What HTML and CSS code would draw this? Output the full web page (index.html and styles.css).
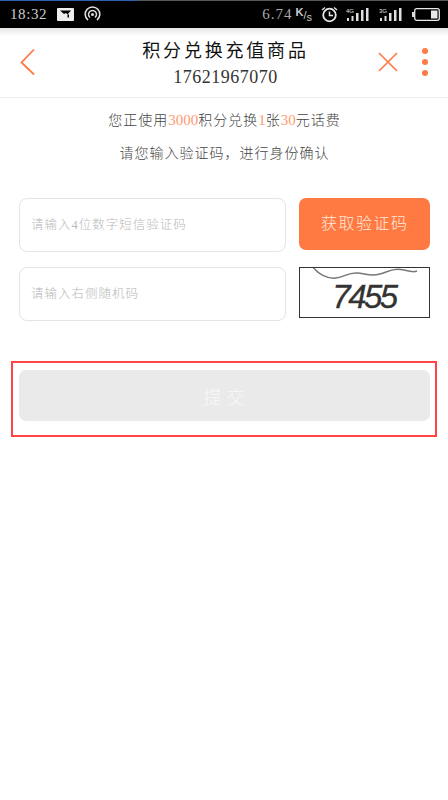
FILE: index.html
```html
<!DOCTYPE html>
<html lang="zh">
<head>
<meta charset="utf-8">
<title>积分兑换充值商品</title>
<link rel="stylesheet" href="styles.css">
</head>
<body>
<div class="statusbar">
  <div class="status-left">
    <span class="time">18:32</span>
    <svg class="ic-msg" width="17" height="13" viewBox="0 0 17 13"><rect width="17" height="13" rx="1" fill="#eee"/><path d="M3 2.500h11l-3.500 4-1.500-1.500-2 1z" fill="#000"/><path d="M10.500 6.500v3h1.500v-3z" fill="#000"/></svg>
    <svg class="ic-cast" width="17" height="17" viewBox="0 0 17 17" fill="none" stroke="#ddd"><path d="M4 14a7.300 7.300 0 1 1 9 0" stroke-width="1.600"/><path d="M6 11.500a4 4 0 1 1 5 0" stroke-width="1.500"/><circle cx="8.500" cy="8.500" r="1.500" fill="#ddd" stroke="none"/></svg>
  </div>
  <div class="status-right">
    <span class="speed">6.74</span>
    <span class="unit"><sup>K</sup>/<sub>s</sub></span>
    <svg class="clock" width="17" height="17" viewBox="0 0 17 17" fill="none" stroke="#e8e8e8"><circle cx="8.500" cy="9" r="6.300" stroke-width="1.800"/><path d="M8.500 5.500V9.500H12" stroke-width="1.500"/><path d="M1 4l3-2.500M16 4l-3-2.500" stroke-width="1.300"/></svg>
    <svg class="signal" width="23" height="15" viewBox="0 0 23 15" fill="#e0e0e0"><text x="0" y="6" class="net">4G</text><rect x="1" y="11" width="2" height="3"/><rect x="5.500" y="9" width="2" height="5"/><rect x="10" y="6" width="2.500" height="8"/><rect x="15" y="3" width="2.500" height="11"/><rect x="20" y="1" width="2.500" height="13"/></svg>
    <svg class="signal" width="23" height="15" viewBox="0 0 23 15" fill="#e0e0e0"><text x="0" y="6" class="net">3G</text><rect x="1" y="11" width="2" height="3"/><rect x="5.500" y="9" width="2" height="5"/><rect x="10" y="6" width="2.500" height="8"/><rect x="15" y="3" width="2.500" height="11"/><rect x="20" y="1" width="2.500" height="13"/></svg>
    <svg class="battery" width="28" height="13" viewBox="0 0 28 13"><rect x="0" y="4" width="2" height="5" fill="#ddd"/><rect x="2.700" y="0.700" width="24.600" height="11.600" rx="2" fill="none" stroke="#e8e8e8" stroke-width="1.300"/><rect x="19" y="2.500" width="6.500" height="8" fill="#e8e8e8"/></svg>
  </div>
</div>
<header class="topbar">
  <svg class="back" width="15" height="28" viewBox="0 0 15 28" fill="none" stroke="#ff7a45" stroke-width="1.800"><path d="M14 1.500 1.500 14.500 14 26.500"/></svg>
  <div class="title">
    <div class="title-main">积分兑换充值商品</div>
    <div class="title-sub">17621967070</div>
  </div>
  <svg class="close" width="20" height="20" viewBox="0 0 20 20" fill="none" stroke="#ff7a45" stroke-width="1.700"><path d="M1 1l18 18M19 1 1 19"/></svg>
  <div class="dots"><i></i><i></i><i></i></div>
</header>
<main>
  <p class="info first">您正使用<em>3000</em>积分兑换<em>1</em>张<em>30</em>元话费</p>
  <p class="info second">请您输入验证码，进行身份确认</p>
  <div class="form-row">
    <div class="field">请输入4位数字短信验证码</div>
    <div class="get-code">获取验证码</div>
  </div>
  <div class="form-row row2">
    <div class="field">请输入右侧随机码</div>
    <div class="captcha">
      <svg class="wave" width="128" height="48" viewBox="0 0 128 48" fill="none" stroke="#777" stroke-width="1.500"><path d="M12-2C18 6 27 11 36 10S48 4 58 5 70 9 80 6 94 0 104 2 114 4 117 3"/></svg>
      <span class="captcha-code">7455</span>
    </div>
  </div>
  <div class="submit-wrap"><div class="submit">提交</div></div>
</main>
</body>
</html>
```
FILE: styles.css
```css
* { box-sizing: border-box; }
html, body { margin: 0; padding: 0; }
body {
  width: 448px;
  height: 800px;
  background: #fff;
  overflow: hidden;
  font-family: "Liberation Serif", "Noto Sans CJK SC", serif;
  color: #333;
}
.statusbar {
  height: 28px;
  background: #000;
  border-top: 1px solid;
  border-image: linear-gradient(90deg, #2a62b0 137px, #555 137px) 1;
  display: flex;
  justify-content: space-between;
  align-items: center;
  padding: 0 8px 0 10px;
  color: #ddd;
}
.status-left, .status-right { display: flex; align-items: center; }
.time { font-size: 15px; letter-spacing: 0.6px; margin-right: 10px; color: #ccc; }
.ic-cast { margin-left: 10px; }
.speed { font-size: 15px; letter-spacing: 1px; color: #aaa; }
.unit { font-size: 11px; margin: 0 9px 0 3px; color: #ccc; font-family: "Liberation Sans", sans-serif; white-space: nowrap; }
.unit sup { vertical-align: 3px; font-size: 11px; font-weight: 700; }
.unit sub { vertical-align: -2px; font-size: 11px; }
.clock { margin-right: 8px; }
.signal { margin-right: 10px; }
.net { font-size: 6px; font-family: "Liberation Sans", sans-serif; }
.topbar {
  height: 70px;
  border-bottom: 1px solid #f0f0f0;
  background: linear-gradient(#e6e6e6, #fff 8px);
  display: flex;
  align-items: center;
  padding: 0 20px;
}
.back { flex: none; margin-top: -2px; }
.title { flex: 1; text-align: center; padding-left: 38px; }
.title-main { font-size: 18px; line-height: 24px; letter-spacing: 2.800px; color: #111; margin-top: 3px; }
.title-sub { font-size: 18px; line-height: 24px; letter-spacing: 0.500px; margin-top: 2px; color: #333; }
.close { flex: none; margin-right: 24px; margin-top: -2px; }
.dots { flex: none; display: flex; flex-direction: column; gap: 5px; margin-top: -2px; }
.dots i { display: block; width: 6px; height: 6px; border-radius: 50%; background: #ff7a45; }
main { padding: 0 18px 0 19px; }
.info { margin: 0; text-align: center; font-size: 14px; letter-spacing: 1px; color: #444; font-weight: 300; line-height: 20px; }
.info em { font-style: normal; color: #ff9a70; letter-spacing: 0; font-size: 15px; }
.first { padding-top: 12px; }
.second { padding-top: 13px; }
.form-row { display: flex; gap: 13px; margin-top: 34px; align-items: flex-start; }
.row2 { margin-top: 15px; }
.field {
  width: 268px;
  height: 54px;
  border: 1.500px solid #e4e4e4;
  border-radius: 8px;
  padding: 0 0 4px 11px;
  display: flex;
  align-items: center;
  font-size: 12.500px;
  letter-spacing: 1px;
  color: #b8b8b8;
  font-weight: 300;
}
.get-code {
  width: 131px;
  height: 52px;
  padding-bottom: 5px;
  background: #ff7a42;
  border-radius: 7px;
  color: #ffe8dc;
  font-size: 16px;
  font-weight: 300;
  letter-spacing: 1.500px;
  display: flex;
  align-items: center;
  justify-content: center;
}
.captcha {
  width: 131px;
  height: 51px;
  border: 1.500px solid #333;
  background: #fff;
  overflow: hidden;
  position: relative;
  padding-left: 32px;
}
.wave { position: absolute; left: 0; top: 0; }
.captcha-code {
  display: block;
  font-family: "Liberation Sans", sans-serif;
  font-style: italic;
  font-size: 33px;
  line-height: 33px;
  letter-spacing: -2.500px;
  color: #333;
  margin-top: 12px;
  -webkit-text-stroke: 0.300px #333;
}
.submit-wrap {
  margin: 40px -7px 0 -8px;
  height: 76px;
  border: 2px solid #f44;
  padding: 7px 5px 0 6px;
}
.submit {
  height: 51px;
  background: #eaeaea;
  border-radius: 7px;
  color: #f8f8f8;
  font-size: 18px;
  font-weight: 300;
  letter-spacing: 5px;
  padding-left: 4px;
  display: flex;
  align-items: center;
  justify-content: center;
}
```
